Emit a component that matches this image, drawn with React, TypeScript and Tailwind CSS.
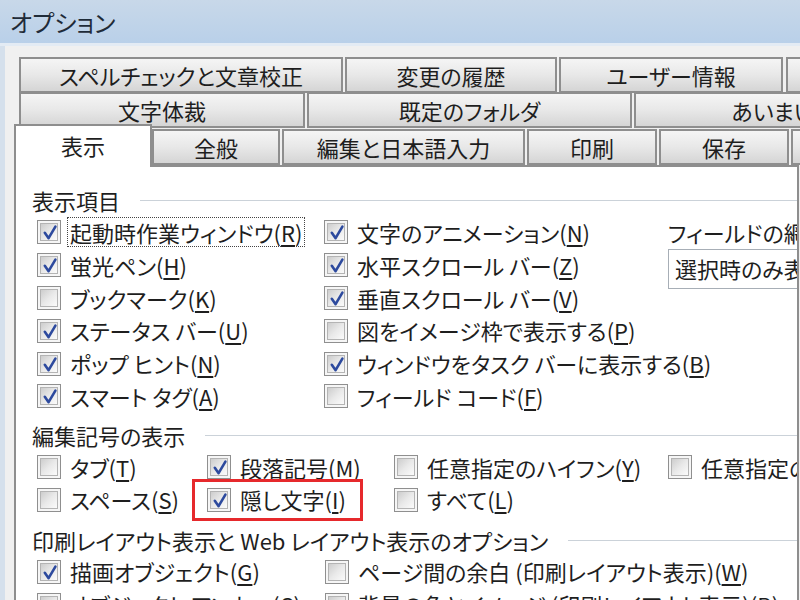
import React from "react";

type Opt = { label: string; k: string; checked?: boolean; focus?: boolean };

function Box({ checked }: { checked?: boolean }) {
  return (
    <span className="relative flex h-[24px] w-[24px] shrink-0 items-center justify-center border border-[#8f8f8f] bg-[#f6f6f6]">
      <span className="h-[18px] w-[18px] border border-[#b4b4b4] bg-gradient-to-br from-[#cdcdcd] via-[#e9e9e9] to-[#fbfbfb]" />
      {checked && (
        <svg className="absolute inset-0" width="24" height="24" viewBox="0 0 24 24">
          <path
            d="M6.8 11.8 L10.6 17.2 L17.4 5.6"
            fill="none"
            stroke="#2d4a9e"
            strokeWidth="2.6"
            strokeLinecap="round"
            strokeLinejoin="round"
          />
        </svg>
      )}
    </span>
  );
}

function Item({ label, k, checked, focus }: Opt) {
  return (
    <div className="flex h-[32.8px] items-center whitespace-nowrap">
      <Box checked={checked} />
      <span
        className={
          focus
            ? "ml-[6px] border border-dotted border-[#444] px-[2px] leading-[28px]"
            : "ml-[9px]"
        }
      >
        {label}(<span className="underline underline-offset-[3px]">{k}</span>)
      </span>
    </div>
  );
}

function Heading({ text, className }: { text: string; className?: string }) {
  return (
    <div className={`flex h-[30px] items-center whitespace-nowrap ${className ?? ""}`}>
      <span>{text}</span>
      <div className="ml-[20px] h-[1px] flex-1 bg-[#cbd2d9]" />
    </div>
  );
}

function Tab({ label, w, className }: { label: string; w: string; className?: string }) {
  return (
    <div
      className={`flex h-[36px] shrink-0 items-center justify-center whitespace-nowrap border-2 border-[#8e8e8e] bg-gradient-to-b from-[#f5f5f5] via-[#e8e8e8] to-[#d5d5d5] ${w} ${className ?? ""}`}
    >
      {label}
    </div>
  );
}

const col1: Opt[] = [
  { label: "起動時作業ウィンドウ", k: "R", checked: true, focus: true },
  { label: "蛍光ペン", k: "H", checked: true },
  { label: "ブックマーク", k: "K" },
  { label: "ステータス バー", k: "U", checked: true },
  { label: "ポップ ヒント", k: "N", checked: true },
  { label: "スマート タグ", k: "A", checked: true },
];

const col2: Opt[] = [
  { label: "文字のアニメーション", k: "N", checked: true },
  { label: "水平スクロール バー", k: "Z", checked: true },
  { label: "垂直スクロール バー", k: "V", checked: true },
  { label: "図をイメージ枠で表示する", k: "P" },
  { label: "ウィンドウをタスク バーに表示する", k: "B", checked: true },
  { label: "フィールド コード", k: "F" },
];

export default function App() {
  return (
    <div className="flex h-[600px] w-[800px] flex-col overflow-hidden bg-[#f0f0f0] text-[22px] text-[#1e1e1e] font-['Noto_Sans_CJK_JP','Noto_Sans',sans-serif] [font-feature-settings:'palt']">
      {/* title bar */}
      <div className="flex h-[43px] shrink-0 items-center bg-gradient-to-b from-[#c8d8e9] to-[#b9d0e9] pl-[10px] text-[24px] text-[#1f2b38]">
        オプション
      </div>
      <div className="h-[3px] shrink-0 bg-[#e3ebf4]" />

      <div className="flex min-h-0 flex-1">
        <div className="w-[5px] shrink-0 bg-[#d5e0ec]" />
        <div className="flex min-w-0 flex-1 flex-col pl-[9px]">
          {/* tab rows */}
          <div className="ml-[5px] mt-[11px] flex gap-[2px]">
            <Tab label="スペルチェックと文章校正" w="w-[324px]" />
            <Tab label="変更の履歴" w="w-[212px]" />
            <Tab label="ユーザー情報" w="w-[224px]" />
            <Tab label="セキュリティ" w="w-[200px]" className="ml-[1px]" />
          </div>
          <div className="ml-[5px] mt-[-1px] flex gap-[2px]">
            <Tab label="文字体裁" w="w-[286px]" />
            <Tab label="既定のフォルダ" w="w-[325px]" />
            <Tab label="あいまい検索" w="w-[322px]" />
          </div>
          <div className="flex h-[37px] items-end">
            <div className="relative z-10 mb-[-2px] flex h-[43px] w-[138px] shrink-0 items-center justify-center border-2 border-b-0 border-[#8e8e8e] bg-white pb-[3px]">
              表示
            </div>
            <Tab label="全般" w="w-[128px]" className="h-[35px]" />
            <Tab label="編集と日本語入力" w="w-[243px]" className="ml-[2px] h-[35px]" />
            <Tab label="印刷" w="w-[130px]" className="ml-[2px] h-[35px]" />
            <Tab label="保存" w="w-[130px]" className="ml-[2px] h-[35px]" />
            <Tab label="互換性" w="w-[130px]" className="ml-[2px] h-[35px]" />
          </div>

          {/* panel */}
          <div className="min-h-0 w-[785px] flex-1 overflow-hidden border-2 border-b-0 border-[#8e8e8e] bg-white pl-[16px] pt-[18px]">
            <Heading text="表示項目" />
            <div className="mt-[1px] flex pl-[5px]">
              <div className="w-[287px] shrink-0">
                {col1.map((o) => (
                  <Item key={o.label} {...o} />
                ))}
              </div>
              <div className="w-[344px] shrink-0">
                {col2.map((o) => (
                  <Item key={o.label} {...o} />
                ))}
              </div>
              <div className="w-[300px] shrink-0">
                <div className="flex h-[32.8px] items-center whitespace-nowrap">
                  フィールドの網かけ表示(<span className="underline underline-offset-[3px]">H</span>)
                </div>
                <div className="flex h-[40px] w-[260px] items-center whitespace-nowrap border border-[#a7aeb6] bg-white pl-[6px]">
                  選択時のみ表示
                </div>
              </div>
            </div>

            <Heading text="編集記号の表示" className="mt-[8px]" />
            <div className="flex pl-[5px]">
              <div className="w-[170px] shrink-0">
                <Item label="タブ" k="T" />
                <Item label="スペース" k="S" />
              </div>
              <div className="w-[187px] shrink-0">
                <Item label="段落記号" k="M" checked />
                <div className="relative">
                  <Item label="隠し文字" k="I" checked />
                  <div className="absolute left-[-15px] top-[-5px] h-[42px] w-[171px] border-[3px] border-[#e6292c]" />
                </div>
              </div>
              <div className="w-[274px] shrink-0">
                <Item label="任意指定のハイフン" k="Y" />
                <Item label="すべて" k="L" />
              </div>
              <div className="w-[300px] shrink-0">
                <Item label="任意指定の改行" k="O" />
              </div>
            </div>

            <Heading text="印刷レイアウト表示と Web レイアウト表示のオプション" className="mt-[9px]" />
            <div className="flex pl-[5px]">
              <div className="w-[288px] shrink-0">
                <Item label="描画オブジェクト" k="G" checked />
                <Item label="オブジェクト アンカー" k="C" />
              </div>
              <div className="w-[440px] shrink-0">
                <Item label="ページ間の余白 (印刷レイアウト表示)" k="W" />
                <Item label="背景の色とイメージ (印刷レイアウト表示)" k="B" />
              </div>
            </div>
          </div>
        </div>
      </div>
    </div>
  );
}
